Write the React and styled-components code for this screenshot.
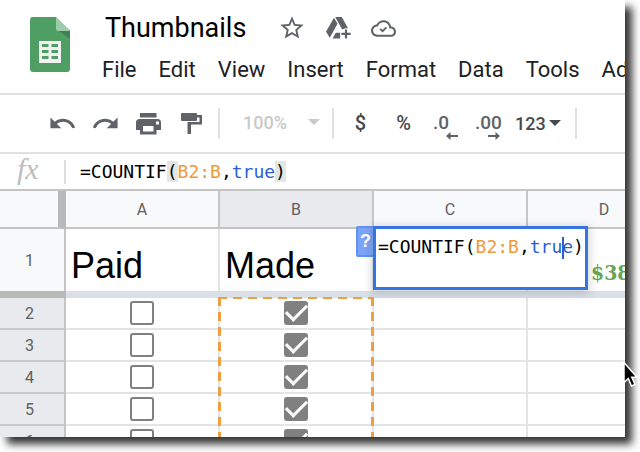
import React, { useState } from "react";
import styled, { createGlobalStyle, css } from "styled-components";
import { MdStarBorder, MdUndo, MdRedo } from "react-icons/md";

const columns = ["A", "B", "C", "D"];

const initialRows = [
  { id: 2, paid: false, made: true },
  { id: 3, paid: false, made: true },
  { id: 4, paid: false, made: true },
  { id: 5, paid: false, made: true },
  { id: 6, paid: false, made: true },
];

const menus = ["File", "Edit", "View", "Insert", "Format", "Data", "Tools", "Add-ons"];

const SheetsLogo = () => (
  <svg width="40" height="55" viewBox="0 0 40 55" aria-hidden="true">
    <path fill="#4f9f65" d="M3 0h23l14 14v38a3 3 0 0 1-3 3H3a3 3 0 0 1-3-3V3a3 3 0 0 1 3-3z" />
    <path fill="#3d8253" d="M28 13l12 9v-9z" />
    <path fill="#9ccdaa" d="M26 0l14 14H28.500a2.500 2.500 0 0 1-2.500-2.500z" />
    <path
      fill="#f1f1f1"
      fillRule="evenodd"
      d="M9 24h22v22H9zM12 27v3h6.500v-3zM21.500 27v3H28v-3zM12 33v3h6.500v-3zM21.500 33v3H28v-3zM12 39v3h6.500v-3zM21.500 39v3H28v-3z"
    />
  </svg>
);

const DriveAddIcon = () => (
  <svg width="25" height="22" viewBox="0 0 25 22" fill="currentColor" aria-hidden="true">
    <path d="M8 .700l3.500 6-7.700 14.100L0 14.700z" />
    <path d="M9.200 0h6.600l6.200 11.200h-2.500l-3.300 1.300z" />
    <path d="M9.800 15.700h4.400v5.700H6.500z" />
    <path d="M18.900 12.400h2.200v3.400h3.500V18h-3.500v3.400h-2.200V18h-3.500v-2.200h3.500z" />
  </svg>
);

const CloudDoneIcon = () => (
  <svg width="25" height="25" viewBox="0 0 24 24" aria-hidden="true">
    <path
      fill="currentColor"
      d="M19.350 10.040C18.670 6.590 15.640 4 12 4 9.110 4 6.600 5.640 5.350 8.040 2.340 8.360 0 10.910 0 14c0 3.310 2.690 6 6 6h13c2.760 0 5-2.240 5-5 0-2.640-2.050-4.780-4.650-4.960zM19 18H6c-2.210 0-4-1.790-4-4 0-2.050 1.530-3.760 3.560-3.970l1.070-.110.500-.950C8.080 7.140 9.940 6 12 6c2.620 0 4.880 1.860 5.390 4.430l.300 1.500 1.530.110c1.560.100 2.780 1.410 2.780 2.960 0 1.650-1.350 3-3 3z"
    />
    <path fill="none" stroke="currentColor" strokeWidth="1.800" d="M8.800 12.300l2.300 2.300 3.700-3.700" />
  </svg>
);

const PrintIcon = () => (
  <svg width="29" height="29" viewBox="0 0 29 29" fill="currentColor" aria-hidden="true">
    <path d="M6 4h16.500v4.500H6z" />
    <path
      fillRule="evenodd"
      d="M5 10h18.500a3.500 3.500 0 0 1 3.500 3.500V21h-4.500v4.500H6V21H2v-7.500A3.500 3.500 0 0 1 5 10zM9 17v5.500h10.500V17zM22 12.500v3h3v-3z"
    />
  </svg>
);

const PaintIcon = () => (
  <svg width="29" height="29" viewBox="0 0 29 29" fill="currentColor" aria-hidden="true">
    <rect x="4" y="4" width="16" height="8" rx="1" />
    <path d="M20 6h5v9.500H14V25h-3.500V13H22.500V8.500H20z" />
  </svg>
);

const Caret = () => (
  <svg width="12" height="6" viewBox="0 0 12 6" fill="currentColor" aria-hidden="true">
    <path d="M0 0h12L6 6z" />
  </svg>
);

const Arrow = ({ right }) => (
  <svg width="12" height="8" viewBox="0 0 12 8" fill="currentColor" aria-hidden="true">
    <path d={right ? "M12 4L7.500 0v3H0v2h7.500v3z" : "M0 4l4.500-4v3H12v2H4.500v3z"} />
  </svg>
);

const Formula = ({ highlight, caret }) => (
  <>
    =COUNTIF<Paren $on={highlight}>(</Paren>
    <Token $color="#ee9a38">B2:B</Token>,
    <Token $color="#2a5fd0">tru{caret && <TextCaret />}e</Token>
    <Paren $on={highlight}>)</Paren>
  </>
);

const App = () => {
  const [rows, setRows] = useState(initialRows);
  const [title, setTitle] = useState("Thumbnails");

  const toggle = (id, key) => {
    setRows(rows.map(row => (row.id === id ? { ...row, [key]: !row[key] } : row)));
  };

  return (
    <Desktop>
      <GlobalStyle />
      <Window>
        <Header>
          <SheetsLogo />
          <div>
            <TitleRow>
              <TitleInput aria-label="Rename" value={title} onChange={e => setTitle(e.target.value)} />
              <IconButton aria-label="Star"><MdStarBorder size={28} /></IconButton>
              <IconButton aria-label="Add shortcut to Drive"><DriveAddIcon /></IconButton>
              <IconButton aria-label="Document status"><CloudDoneIcon /></IconButton>
            </TitleRow>
            <Menu>
              {menus.map(name => <MenuButton key={name}>{name}</MenuButton>)}
            </Menu>
          </div>
        </Header>

        <Toolbar>
          <IconGroup>
            <IconButton aria-label="Undo"><MdUndo size={29} /></IconButton>
            <IconButton aria-label="Redo"><MdRedo size={29} /></IconButton>
            <IconButton aria-label="Print"><PrintIcon /></IconButton>
            <IconButton aria-label="Paint format"><PaintIcon /></IconButton>
          </IconGroup>
          <Separator />
          <ZoomButton disabled>100% <Caret /></ZoomButton>
          <Separator />
          <FormatGroup>
            <FormatButton>$</FormatButton>
            <FormatButton>%</FormatButton>
            <DecimalButton aria-label="Decrease decimal places">.0<Arrow /></DecimalButton>
            <DecimalButton aria-label="Increase decimal places">.00<Arrow right /></DecimalButton>
            <NumberButton>123 <Caret /></NumberButton>
          </FormatGroup>
          <Separator />
        </Toolbar>

        <FormulaBar>
          <Fx>fx</Fx>
          <FormulaInput role="textbox" aria-label="Formula bar" tabIndex={0}>
            <Formula highlight />
          </FormulaInput>
        </FormulaBar>

        <Grid>
          <colgroup>
            <Col $width={66} />
            {columns.map(name => <Col key={name} $width={154} />)}
          </colgroup>
          <thead>
            <tr>
              <Corner />
              {columns.map(name => (
                <ColumnHead key={name} scope="col" $active={name === "B"}>{name}</ColumnHead>
              ))}
            </tr>
          </thead>
          <tbody>
            <TitleCells>
              <RowHead scope="row">1</RowHead>
              <HeadingCell>Paid</HeadingCell>
              <HeadingCell>Made</HeadingCell>
              <EditedCell>
                <HelpBadge aria-label="Formula help">?</HelpBadge>
                <CellEditor role="textbox" aria-label="C1" tabIndex={0}>
                  <Formula caret />
                </CellEditor>
              </EditedCell>
              <MoneyCell>$38</MoneyCell>
            </TitleCells>
            <tr>
              <FreezeBar $dark />
              <FreezeBar colSpan={4} />
            </tr>
            {rows.map((row, i) => (
              <tr key={row.id}>
                <RowHead scope="row" $active>{row.id}</RowHead>
                <Cell>
                  <Checkbox
                    aria-label={`Paid, row ${row.id}`}
                    checked={row.paid}
                    onChange={() => toggle(row.id, "paid")}
                  />
                </Cell>
                <Cell>
                  {i === 0 && <RangeMarquee />}
                  <Checkbox
                    aria-label={`Made, row ${row.id}`}
                    checked={row.made}
                    onChange={() => toggle(row.id, "made")}
                  />
                </Cell>
                <Cell />
                <Cell />
              </tr>
            ))}
          </tbody>
        </Grid>
      </Window>
      <Pointer width="15" height="27" viewBox="0 0 15 27" aria-hidden="true">
        <path
          fill="#000"
          stroke="#fff"
          strokeWidth="1.500"
          d="M1 1.500v20l4.300-4 3.200 7.500 3.500-1.500-3.200-7.300H14z"
        />
      </Pointer>
    </Desktop>
  );
};
export default App;

const GlobalStyle = createGlobalStyle`
  * {
    box-sizing: border-box;
  }

  body {
    margin: 0;
    background: #fff;
    font-family: Roboto, Arial, sans-serif;
  }

  svg {
    display: block;
    flex: none;
  }
`;

const Desktop = styled.div`
  position: relative;
  height: 100vh;
  padding: 0 15px 15px 0;
  overflow: hidden;
`;

const Window = styled.main`
  height: 100%;
  overflow: hidden;
  background: #fff;
  box-shadow: 7px 7px 8px rgba(0, 0, 0, 0.8);
`;

const Header = styled.header`
  display: flex;
  gap: 32px;
  padding: 10px 0 8px 30px;
  border-bottom: 2px solid #e0e1e5;

  & > svg {
    margin-top: 7px;
  }
`;

const TitleRow = styled.div`
  display: flex;
  align-items: center;
  height: 36px;
  gap: 20px;
  padding-left: 3px;
`;

const TitleInput = styled.input`
  width: 153px;
  padding: 0;
  border: 0;
  outline: 0;
  background: none;
  color: #000;
  font: 27px/34px Roboto, sans-serif;
`;

const plainButton = css`
  padding: 0;
  border: 0;
  background: none;
  color: #5f6368;
  font-family: inherit;
  white-space: nowrap;
`;

const IconButton = styled.button`
  ${plainButton}
`;

const Menu = styled.nav`
  display: flex;
  gap: 22px;
  margin-top: 9px;
`;

const MenuButton = styled.button`
  ${plainButton}
  color: #202124;
  font-size: 22px;
  line-height: 30px;
`;

const Toolbar = styled.div`
  display: flex;
  align-items: center;
  height: 59px;
  padding: 0 0 1px 48px;
  border-bottom: 2px solid #e0e1e5;
`;

const IconGroup = styled.div`
  display: flex;
  gap: 14px;
  padding-right: 12px;
`;

const Separator = styled.span`
  flex: none;
  width: 2px;
  height: 31px;
  background: #dfe0e3;
`;

const ZoomButton = styled.button`
  ${plainButton}
  display: flex;
  align-items: center;
  justify-content: space-between;
  width: 112px;
  padding: 0 12px 2px 23px;
  color: #c9c9c9;
  font-size: 18px;
  font-weight: 500;
`;

const FormatGroup = styled.div`
  display: flex;
  align-items: center;
  padding: 0 14px 0 5px;
`;

const FormatButton = styled.button`
  ${plainButton}
  width: 43px;
  color: #47494d;
  font-size: 20px;
  font-weight: 500;
`;

const DecimalButton = styled.button`
  ${plainButton}
  display: flex;
  flex-direction: column;
  width: 42px;
  padding: 8px 9px 0 8px;
  font-size: 19px;
  font-weight: 500;
  line-height: 18px;
  text-align: left;

  & > svg {
    align-self: flex-end;
  }
`;

const NumberButton = styled.button`
  ${plainButton}
  display: flex;
  align-items: center;
  gap: 3px;
  padding-left: 6px;
  color: #47494d;
  font-size: 18px;
  font-weight: 500;
`;

const FormulaBar = styled.div`
  display: flex;
  align-items: center;
  height: 37px;
  border-bottom: 2px solid #c4c4c4;
`;

const Fx = styled.span`
  width: 64px;
  padding: 0 0 6px 17px;
  color: #bdbdbd;
  font: italic 30px/30px "Liberation Serif", serif;
`;

const formulaText = css`
  color: #000;
  font: 18px/24px "DejaVu Sans Mono", monospace;
  white-space: nowrap;
  outline: 0;
`;

const FormulaInput = styled.div`
  ${formulaText}
  flex: 1;
  padding-left: 14px;
  border-left: 2px solid #dcdcdc;
`;

const Token = styled.span`
  color: ${({ $color }) => $color};
`;

const Paren = styled.span`
  background: ${({ $on }) => ($on ? "#e4e5e5" : "none")};
`;

const TextCaret = styled.span`
  display: inline-block;
  width: 2px;
  height: 22px;
  margin-right: -2px;
  background: #2a5fd0;
  vertical-align: middle;
`;

const Grid = styled.table`
  width: 682px;
  table-layout: fixed;
  border-collapse: separate;
  border-spacing: 0;
`;

const Col = styled.col`
  width: ${({ $width }) => $width}px;
`;

const Corner = styled.td`
  padding: 0;
  border-right: 8px solid #b9b9b9;
  border-bottom: 2px solid #c4c4c4;
  background: #f8f9fa;
`;

const ColumnHead = styled.th`
  height: 38px;
  padding: 0;
  border-right: 2px solid #c6c6c6;
  border-bottom: 2px solid #c4c4c4;
  background: ${({ $active }) => ($active ? "#e8eaed" : "#f8f9fa")};
  color: #606060;
  font-size: 16px;
  font-weight: 400;
`;

const RowHead = styled.th`
  padding: 0 5px 0 0;
  border-right: 2px solid #c4c4c4;
  border-bottom: ${({ $active }) => ($active ? "2px solid #c6c8c6" : "0")};
  background: ${({ $active }) => ($active ? "#e8eaed" : "#f8f9fa")};
  color: #606060;
  font-size: 16px;
  font-weight: 400;
`;

const TitleCells = styled.tr`
  height: 62px;
`;

const Cell = styled.td`
  position: relative;
  height: 32px;
  padding: 0;
  border-right: 2px solid #e4e4e4;
  border-bottom: 2px solid #e4e4e4;
  text-align: center;
`;

const HeadingCell = styled(Cell)`
  padding: 0 5px 5px;
  border-bottom: 0;
  color: #000;
  font: 36px/40px "Liberation Sans", Arial, sans-serif;
  text-align: left;
  vertical-align: bottom;
`;

const EditedCell = styled(HeadingCell)`
  padding: 0;
`;

const MoneyCell = styled(HeadingCell)`
  padding: 0 0 6px 63px;
  color: #6aa452;
  font: bold 21px/24px "DejaVu Serif Condensed", "DejaVu Serif", serif;
`;

/* sits over C1 and spills into D1 while the cell is being edited */
const CellEditor = styled.div`
  ${formulaText}
  position: absolute;
  z-index: 2;
  top: -3px;
  left: -1px;
  width: 215px;
  height: 64px;
  padding: 6px 0 0 2px;
  border: 3px solid #3674e0;
  background: #fff;
  box-shadow: 0 2px 8px 2px rgba(60, 64, 67, 0.2);
`;

const HelpBadge = styled.button`
  ${plainButton}
  position: absolute;
  z-index: 1;
  top: -3px;
  left: -18px;
  width: 19px;
  height: 31px;
  border: 2px solid #5f92f2;
  border-radius: 2px;
  background: #7ba3f7;
  color: #fff;
  font-size: 18px;
  font-weight: 700;
`;

const FreezeBar = styled.td`
  height: 7px;
  padding: 0;
  background: ${({ $dark }) => ($dark ? "#b9b9b9" : "#dadfe8")};
`;

const Checkbox = styled.input.attrs({ type: "checkbox" })`
  appearance: none;
  display: inline-grid;
  place-items: center;
  width: 24px;
  height: 24px;
  margin: 0;
  border: 2px solid #808080;
  border-radius: 3px;
  vertical-align: middle;

  &:checked {
    background: #808080;
  }

  &:checked::after {
    content: "";
    width: 18px;
    height: 9px;
    margin-bottom: 6px;
    border: solid #fff;
    border-width: 0 0 3px 3px;
    transform: rotate(-45deg);
  }
`;

const dashes = angle =>
  `repeating-linear-gradient(${angle}, #ee9f42 0 9px, transparent 9px 15px)`;

/* dashed outline round the referenced range, runs on below the last row */
const RangeMarquee = styled.div`
  position: absolute;
  z-index: 1;
  top: -1px;
  left: -2px;
  right: -2px;
  height: 100vh;
  background:
    ${dashes("to right")} top / 100% 2px no-repeat,
    ${dashes("to bottom")} left / 3px 100% no-repeat,
    ${dashes("to bottom")} right / 3px 100% no-repeat;
  pointer-events: none;
`;

const Pointer = styled.svg`
  position: absolute;
  right: 2px;
  bottom: 64px;
`;
